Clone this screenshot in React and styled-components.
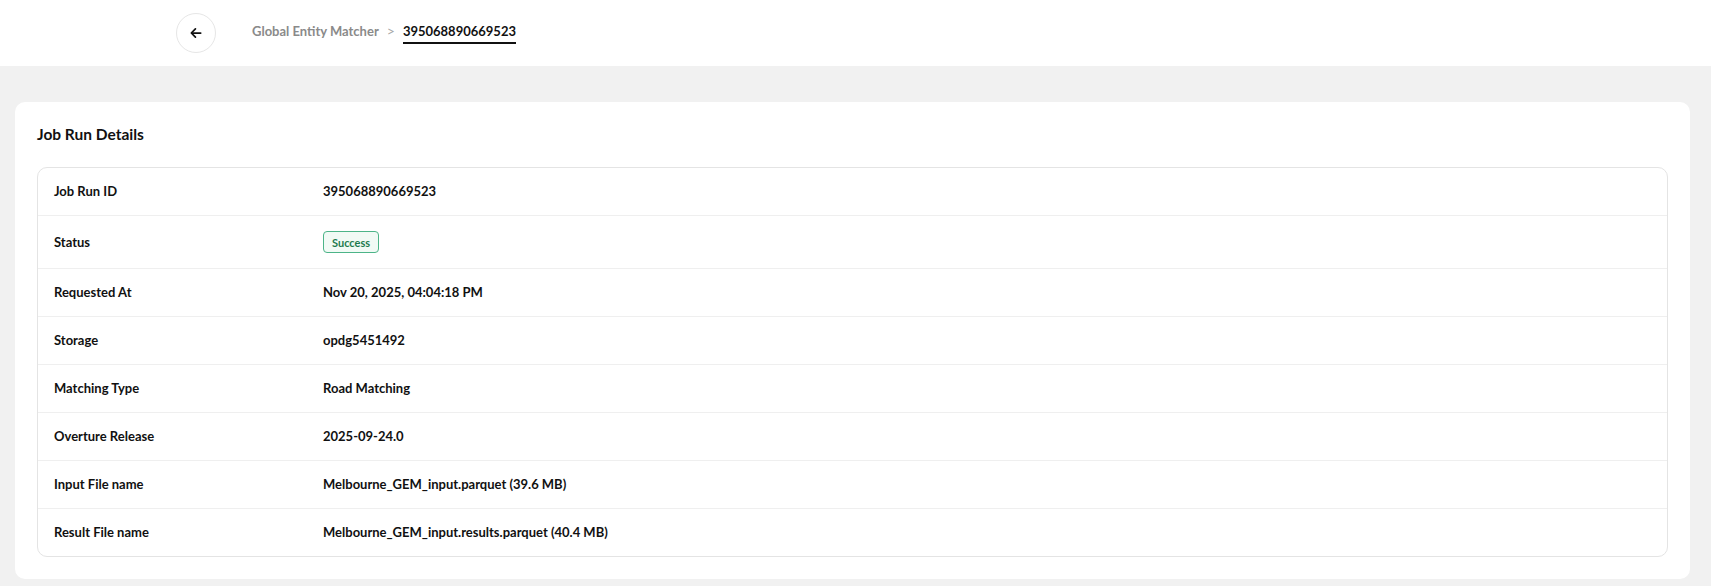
import React from 'react';
import styled, { createGlobalStyle } from 'styled-components';

const GlobalStyle = createGlobalStyle`
  html, body {
    margin: 0;
    padding: 0;
    background: #f1f1f1;
    font-family: Lato, "Noto Sans", Arial, sans-serif;
    color: #111;
  }
  * { box-sizing: border-box; }
`;

const Page = styled.div`
  min-height: 586px;
  background: #f1f1f1;
`;

const Header = styled.header`
  height: 66px;
  background: #fff;
  display: flex;
  align-items: center;
  padding-left: 176px;
  gap: 36px;
`;

const BackButton = styled.button`
  width: 40px;
  height: 40px;
  border-radius: 50%;
  border: 1px solid #e6e6e6;
  background: #fff;
  display: flex;
  align-items: center;
  justify-content: center;
  padding: 0;
  cursor: pointer;
`;

const Crumbs = styled.nav`
  display: flex;
  align-items: baseline;
  gap: 8px;
  font-size: 13px;
  font-weight: 700;
  line-height: 17px;
`;

const CrumbLink = styled.span`
  color: #8a8a8a;
`;

const Sep = styled.span`
  color: #a8a8a8;
  font-weight: 400;
  font-size: 14px;
`;

const CrumbCurrent = styled.span`
  color: #111;
  padding-bottom: 2px;
  border-bottom: 2px solid #111;
`;

const Card = styled.section`
  margin: 36px 21px 9px 15px;
  background: #fff;
  border-radius: 10px;
  padding: 22px;
`;

const Title = styled.h2`
  margin: 0 0 23px;
  font-size: 15.5px;
  font-weight: 700;
  line-height: 20px;
`;

const Table = styled.div`
  border: 1px solid #e4e4e4;
  border-radius: 10px;
`;

const Row = styled.div`
  display: grid;
  grid-template-columns: 269px 1fr;
  align-items: center;
  padding: 15px 16px;
  font-size: 13px;
  font-weight: 700;
  line-height: 17px;
  & + & {
    border-top: 1px solid #efefef;
  }
`;

const Badge = styled.span`
  justify-self: start;
  display: inline-flex;
  align-items: center;
  height: 22px;
  padding: 0 8px;
  border: 1px solid #4cb488;
  border-radius: 4px;
  background: #f1faf5;
  color: #1d7a4e;
  font-size: 11px;
  font-weight: 700;
`;

const rows = [
  ['Job Run ID', '395068890669523'],
  ['Status', null],
  ['Requested At', 'Nov 20, 2025, 04:04:18 PM'],
  ['Storage', 'opdg5451492'],
  ['Matching Type', 'Road Matching'],
  ['Overture Release', '2025-09-24.0'],
  ['Input File name', 'Melbourne_GEM_input.parquet (39.6 MB)'],
  ['Result File name', 'Melbourne_GEM_input.results.parquet (40.4 MB)'],
];

export default function App() {
  return (
    <Page>
      <GlobalStyle />
      <Header>
        <BackButton aria-label="Back">
          <svg width="14" height="14" viewBox="0 0 24 24" fill="none" stroke="#111" strokeWidth="3" strokeLinecap="round" strokeLinejoin="round">
            <path d="M20 12H5" />
            <path d="M11 5l-7 7 7 7" />
          </svg>
        </BackButton>
        <Crumbs>
          <CrumbLink>Global Entity Matcher</CrumbLink>
          <Sep>&gt;</Sep>
          <CrumbCurrent>395068890669523</CrumbCurrent>
        </Crumbs>
      </Header>
      <Card>
        <Title>Job Run Details</Title>
        <Table>
          {rows.map(([label, value]) => (
            <Row key={label}>
              <span>{label}</span>
              {value === null ? <Badge>Success</Badge> : <span>{value}</span>}
            </Row>
          ))}
        </Table>
      </Card>
    </Page>
  );
}
